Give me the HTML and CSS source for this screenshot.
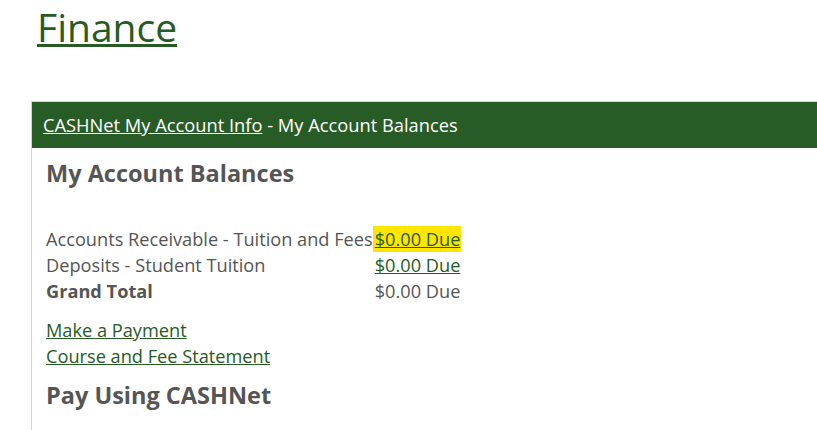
FILE: index.html
```html
<!DOCTYPE html>
<html>
<head>
<meta charset="utf-8">
<link rel="stylesheet" href="styles.css">
</head>
<body>
<div class="page">
  <h1 class="site-title"><a href="#">Finance</a></h1>
  <div class="panel">
    <div class="panel-header"><a href="#">CASHNet My Account Info</a> - My Account Balances</div>
    <div class="panel-body">
      <h2 class="section-title">My Account Balances</h2>
      <table class="balances">
        <tr>
          <td class="label">Accounts Receivable - Tuition and Fees</td>
          <td class="value highlight"><a href="#">$0.00 Due</a></td>
        </tr>
        <tr>
          <td class="label">Deposits - Student Tuition</td>
          <td class="value"><a href="#">$0.00 Due</a></td>
        </tr>
        <tr>
          <td class="label total">Grand Total</td>
          <td class="value">$0.00 Due</td>
        </tr>
      </table>
      <div class="links">
        <a href="#">Make a Payment</a>
        <a href="#">Course and Fee Statement</a>
      </div>
      <h2 class="section-title">Pay Using CASHNet</h2>
    </div>
  </div>
</div>
</body>
</html>
```
FILE: styles.css
```css
html, body {
  margin: 0;
  padding: 0;
  background: #fff;
}
body {
  font-family: "Open Sans", "Liberation Sans", sans-serif;
  color: #555;
  overflow: hidden;
}
a {
  color: #275b24;
}
.page {
  padding: 0 0 0 31px;
}
.site-title {
  margin: 0;
  padding: 0 0 0 6px;
  font-size: 39px;
  font-weight: 400;
  line-height: 54px;
}
.site-title a {
  color: #275b24;
}
.panel {
  margin-top: 47px;
  border-top: 1px solid #d4d4d4;
  border-left: 1px solid #d4d4d4;
}
.panel-header {
  background: #285c26;
  color: #fff;
  font-size: 18.3px;
  height: 46px;
  line-height: 46px;
  padding-left: 11px;
  white-space: nowrap;
}
.panel-header a {
  color: #fff;
}
.panel-body {
  padding: 8px 0 30px 14px;
}
.section-title {
  margin: 0;
  font-size: 23.5px;
  font-weight: 700;
  line-height: 34px;
  color: #555;
}
.balances {
  border-collapse: collapse;
  margin-top: 36px;
  font-size: 18.2px;
}
.balances td {
  padding: 0;
  height: 26px;
  line-height: 26px;
  white-space: nowrap;
}
.balances td.value {
  padding: 0 1px 0 2px;
}
.balances .highlight {
  background: #ffe600;
}
.balances .total {
  font-weight: 700;
}
.links {
  display: flex;
  flex-direction: column;
  align-items: flex-start;
  margin-top: 13px;
  font-size: 18.2px;
  line-height: 26px;
}
.links + .section-title {
  margin-top: 9px;
}
```
